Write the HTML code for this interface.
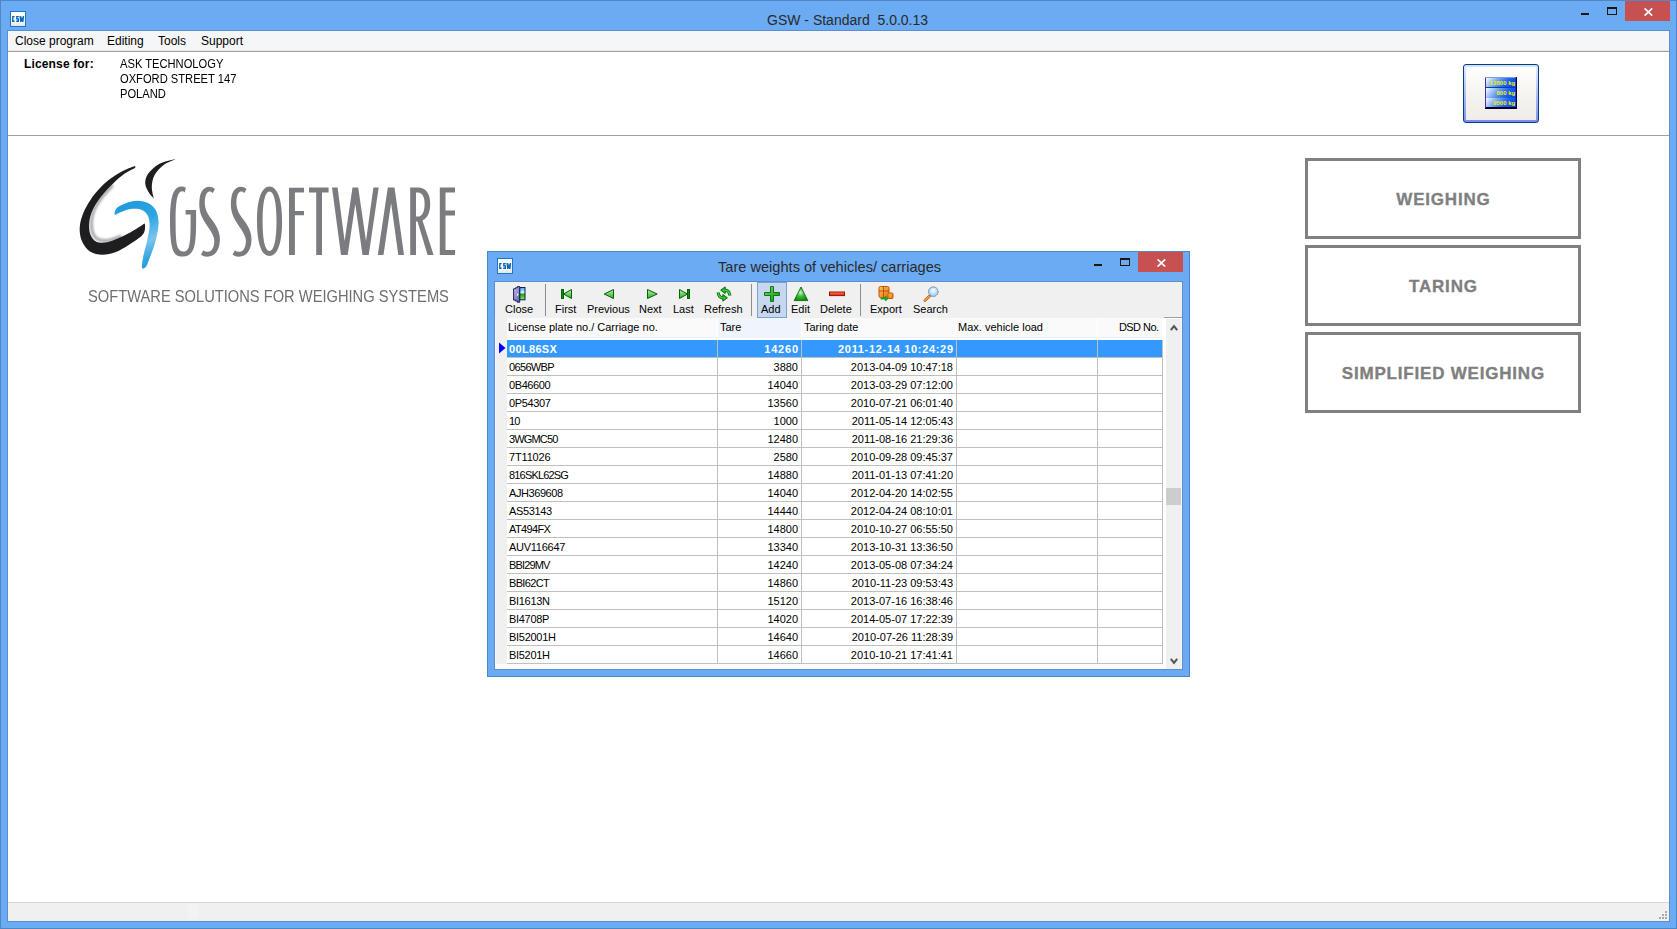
<!DOCTYPE html>
<html><head><meta charset="utf-8">
<style>
*{box-sizing:border-box;margin:0;padding:0}
html,body{width:1677px;height:929px;overflow:hidden;background:#fff}
body{position:relative;font-family:"Liberation Sans",sans-serif;color:#000}
.a{position:absolute}
#frame{left:0;top:0;width:1677px;height:929px;background:#6BABF3;border:1px solid #4E86C6}
.ttl{white-space:nowrap}
.gl{background:#1B160F}
.cbtn{background:#C75050}
.xg{position:absolute;left:0;top:0}
#client{left:8px;top:31px;width:1661px;height:890px;background:#fff;outline:1px solid #5A8ED0}
#menu{left:0;top:0;width:1661px;height:21px;background:#F5F6F7;border-bottom:1px solid #A0A0A0;box-shadow:inset 0 -1px 0 #E6E7E9}
#menu span{position:absolute;top:3px;font-size:12px;line-height:15px;color:#000}
.lic{font-size:12px;line-height:15px;margin-top:1px;white-space:nowrap}
.bigbtn{border:3px solid #808080;width:276px;height:81px;background:#fff;color:#7F7F7F;font-weight:bold;font-size:17px;text-align:center;line-height:77px;letter-spacing:0.8px;padding-left:0.8px;-webkit-text-stroke:0.35px #7F7F7F;white-space:nowrap}
#dlg{left:487px;top:251px;width:703px;height:426px;background:#6BABF3;border:1px solid #4E86C6}
#dclient{left:7px;top:30px;width:687px;height:387px;background:#fff;outline:1px solid #5A8ED0}
#tb{left:0;top:0;width:687px;height:36px;background:#F0F0F0}
.tbt{position:absolute;top:20px;font-size:11px;line-height:14px;white-space:nowrap}
.sep{position:absolute;top:2px;width:1px;height:32px;background:#8C8C8C}
.hdr{position:absolute;top:36px;height:20px;background:#FAFAFA;font-size:11px;line-height:14px;padding-top:2px;white-space:nowrap;border-bottom:1px solid #EDF2F9}
.row{position:absolute;left:12px;width:656px;height:18px;border-bottom:1px solid #BFBFBF}
.c{position:absolute;top:0;height:17px;font-size:11px;line-height:19px;white-space:nowrap;padding-top:0;border-right:1px solid #BFBFBF}
.r{text-align:right;padding-right:3px}
.l{padding-left:2px}
.sel{background:#3399FF;color:#fff;font-weight:bold}
</style></head><body>
<div id="frame" class="a"></div>
<!-- title bar -->
<svg class="a" style="left:10px;top:11px" width="16" height="16" viewBox="0 0 16 16">
<defs><linearGradient id="ig10" x1="0" y1="0" x2="0" y2="1"><stop offset="0" stop-color="#FFFFFF"/><stop offset="0.7" stop-color="#F6F6F6"/><stop offset="1" stop-color="#E2E2E2"/></linearGradient></defs>
<rect x="0.5" y="0.5" width="15" height="15" fill="url(#ig10)" stroke="#1B78C8"/>
<path d="M4.6 5.6H2.8V10.3H4.6M8.8 5.6H6.8V7.9H8.3V10.3H6.2M10.1 5L10.8 10.9L11.8 7.3L12.8 10.9L13.5 5" fill="none" stroke="#0B66B8" stroke-width="1.4"/>
</svg>
<div class="a ttl" style="left:767px;top:11px;font-size:14px;line-height:18px;color:#2A2A2A">GSW - Standard&nbsp; 5.0.0.13</div>
<div class="a gl" style="left:1581px;top:13px;width:8px;height:2px"></div>
<div class="a" style="left:1607px;top:7px;width:10px;height:8px;border:1px solid #1B160F;border-top-width:2px"></div>
<div class="a cbtn" style="left:1625px;top:1px;width:45px;height:20px"></div>
<svg class="a" style="left:1644px;top:8px" width="9" height="8" viewBox="0 0 9 8"><path d="M0.6 0.4L8.2 7.6M8.2 0.4L0.6 7.6" stroke="#fff" stroke-width="1.7"/></svg>

<div id="client" class="a">
  <div id="menu" class="a">
    <span style="left:7px">Close program</span>
    <span style="left:99px">Editing</span>
    <span style="left:150px">Tools</span>
    <span style="left:193px">Support</span>
  </div>
  <div class="a lic" style="left:16px;top:25px;font-weight:bold;letter-spacing:0.15px">License for:</div>
  <div class="a lic" style="left:112px;top:25px;transform-origin:0 0;transform:scaleX(0.93)">ASK TECHNOLOGY<br>OXFORD STREET 147<br>POLAND</div>
  <div class="a" style="left:0;top:104px;width:1661px;height:1px;background:#A0A0A0"></div>
  <div class="a" style="left:0;top:871px;width:1661px;height:19px;background:#F0F0F0;border-top:1px solid #D7D7D7"></div>
  <div class="a" style="left:180px;top:873px;width:10px;height:15px;background:#F3F3F3"></div>
</div>

<svg class="a" style="left:70px;top:150px" width="400" height="170" viewBox="70 150 400 170">
 <defs>
  <filter id="blr" x="-20%" y="-20%" width="140%" height="140%"><feGaussianBlur stdDeviation="0.8"/></filter><linearGradient id="blu" x1="0" y1="0" x2="0.3" y2="1"><stop offset="0" stop-color="#1B98DA"/><stop offset="0.45" stop-color="#2EA6E2"/><stop offset="0.75" stop-color="#7CC4EE"/><stop offset="1" stop-color="#2EA2E0"/></linearGradient>
 </defs>
 <path d="M111.9 186.2 C110.2 188.1 104.8 193.5 101.8 197.5 C98.9 201.4 95.9 205.8 94.2 209.9 C92.4 213.9 91.7 217.8 91.5 221.7 C91.4 225.7 91.8 230.6 93.0 233.6 C94.1 236.5 95.7 238.3 98.3 239.5 C100.9 240.6 104.7 240.9 108.4 240.4 C112.0 239.9 118.2 237.2 120.2 236.5" fill="none" stroke="#A8AAAE" stroke-width="3.2" stroke-linecap="round" filter="url(#blr)"/>
 <path d="M133.6 166.5 C131.5 167.0 126.4 169.1 122.3 171.2 C118.3 173.4 113.5 176.3 109.3 179.5 C105.2 182.8 101.0 186.7 97.5 190.8 C93.9 194.8 90.7 199.3 88.0 203.8 C85.4 208.3 82.9 213.5 81.5 218.0 C80.1 222.5 79.5 226.9 79.7 231.0 C79.9 235.1 80.9 239.4 82.7 242.8 C84.5 246.3 87.1 249.7 90.4 251.7 C93.6 253.7 98.1 254.6 102.2 254.7 C106.4 254.8 110.9 253.9 115.2 252.3 C119.6 250.7 124.3 247.6 128.3 245.2 C132.2 242.8 136.2 240.3 138.9 238.1 C141.6 235.9 143.2 234.6 144.2 232.2 C145.2 229.8 145.3 225.0 144.8 223.9 C144.3 222.8 143.6 224.3 141.3 225.7 C138.9 227.1 134.4 230.1 130.6 232.2 C126.9 234.3 122.7 236.4 118.8 238.1 C114.8 239.8 110.7 241.7 107.0 242.2 C103.2 242.8 99.1 242.9 96.3 241.7 C93.5 240.4 91.6 237.7 90.4 234.6 C89.2 231.4 88.8 226.9 89.2 222.7 C89.6 218.6 90.8 214.0 92.8 209.7 C94.7 205.4 97.7 201.0 101.0 196.7 C104.4 192.3 108.9 187.5 112.9 183.7 C116.8 179.8 121.1 176.2 124.7 173.6 C128.4 171.0 133.3 169.2 134.8 168.0 C136.2 166.9 135.7 166.0 133.6 166.5 Z" fill="#1E1E20"/>
 <path d="M173.8 159.5 C171.4 160.1 163.8 161.4 159.5 163.7 C155.3 166.0 150.7 170.2 148.3 173.5 C145.9 176.8 145.1 180.3 145.2 183.6 C145.4 186.9 147.7 190.7 149.4 193.4 C151.2 196.0 154.9 199.0 155.6 199.7 C156.3 200.3 154.3 199.5 153.6 197.3 C153.0 195.1 151.7 190.1 151.8 186.4 C152.0 182.6 152.6 178.4 154.6 174.9 C156.6 171.4 160.5 167.6 163.7 165.1 C166.9 162.6 172.1 161.0 173.8 160.1 C175.5 159.1 176.2 158.9 173.8 159.5 Z" fill="#1E1E20"/>
 <path d="M114.6 212.7 C115.0 211.4 115.7 208.9 117.6 207.3 C119.5 205.8 122.5 204.3 125.9 203.2 C129.2 202.1 134.0 200.8 137.7 200.8 C141.5 200.8 145.4 201.7 148.4 203.2 C151.3 204.7 153.8 207.0 155.5 209.7 C157.1 212.4 158.0 215.6 158.4 219.2 C158.8 222.7 158.5 226.7 157.8 231.0 C157.1 235.3 155.7 240.7 154.3 245.2 C152.9 249.7 151.0 254.6 149.6 258.2 C148.1 261.9 147.1 265.6 145.8 267.1 C144.5 268.6 142.2 269.5 141.9 267.5 C141.5 265.4 142.8 259.2 143.6 254.7 C144.5 250.2 146.2 245.2 147.2 240.5 C148.2 235.7 149.5 230.4 149.6 226.3 C149.7 222.1 149.2 218.4 147.8 215.6 C146.4 212.9 144.1 210.8 141.3 209.7 C138.4 208.6 134.0 208.7 130.6 209.1 C127.3 209.5 123.7 211.1 121.2 212.1 C118.6 213.0 116.6 214.6 115.5 214.7 C114.4 214.8 114.3 213.9 114.6 212.7 Z" fill="url(#blu)"/>
 <g fill="#7A7C80">
  <!-- G -->
  <path d="M185.8 187.8 C182 185.5 177 186.5 174.3 191 C171 196.5 170 207 170 221 C170 236 171 247 174 252.5 C176.5 256.5 180 256.5 183.5 256.5 C188 256.5 191.5 254 193.8 248 C195.8 242 196.1 232 196.1 222 L196.1 210 L185.6 210 L185.6 214.5 L190.6 214.5 L190.6 224 C190.6 236 190 244 188.5 248 C187 251 185 251.5 183.2 251.5 C181 251.5 179.2 250.5 178 248 C176 244 175.6 234 175.6 221 C175.6 207 176.4 198 178.5 194 C180.5 190.5 183 191 184.8 192.4 Z"/>
  <!-- S -->
  <path id="S" d="M214.9 189.1 C211 185.5 205.5 186 202.3 190.5 C199.8 194 199.3 200 199.3 205 C199.3 212 202 218 206 224 C211 231.5 214.3 236 214.3 241 C214.3 246 212.5 250.5 209.5 251.5 C207 252.2 205 251.5 203.3 250.2 L201 254.5 C203.5 256.8 207 257 210 256.3 C216 255 219.9 249 219.9 239 C219.9 232 216.5 226 212.5 220.5 C208 214.5 204.8 210 204.8 203 C204.8 197.5 206 193 208.5 191.8 C210 191 211.5 191.5 212.8 193 Z"/>
  <use href="#S" x="31.6"/>
  <!-- O -->
  <path fill-rule="evenodd" d="M269.5 186.4 C262 186.4 257 198 257 221.2 C257 244.4 262 256 269.5 256 C277 256 282.1 244.4 282.1 221.2 C282.1 198 277 186.4 269.5 186.4 Z M269.5 191.5 C265 191.5 262.6 202 262.6 221.2 C262.6 240.4 265 250.9 269.5 250.9 C274 250.9 276.5 240.4 276.5 221.2 C276.5 202 274 191.5 269.5 191.5 Z"/>
  <!-- F -->
  <path d="M289 187.8 H304 V192.4 H294.9 V211 H304 V215.2 H294.9 V255 H289 Z"/>
  <!-- T -->
  <path d="M309 187.6 H328.6 V192.4 H322 V254.9 H316.2 V192.4 H309 Z"/>
  <!-- W -->
  <path d="M332 187.6 H337.6 L344.6 241 L352.5 187.6 H358.2 L366 241 L373.4 187.6 H378.7 L368.7 254.9 H362.5 L355.3 204 L347.7 254.9 H341 Z"/>
  <!-- A -->
  <path d="M387.8 187.6 H394.5 L404 254.9 H398.3 L391.1 203 L383.5 254.9 H377.8 Z"/>
  <!-- R -->
  <path fill-rule="evenodd" d="M410.2 187.6 H418 C426 187.6 430.2 194 430.2 204 C430.2 213 427 218.5 422.5 220.5 L433.6 254.9 H427.6 L417.5 221.5 H416 V254.9 H410.2 Z M416 192.6 V216.6 H418 C422 216.6 424.6 212 424.6 204 C424.6 196.5 422 192.6 418 192.6 Z"/>
  <!-- E -->
  <path d="M439.8 187.6 H455 V192.4 H445.5 V210.5 H455 V215.5 H445.5 V250 H455 V254.9 H439.8 Z"/>
 </g>
</svg>
<div class="a" style="left:88px;top:288px;font-size:16.6px;line-height:18px;color:#6E6E6E;white-space:nowrap;transform-origin:0 0;transform:scaleX(0.885)">SOFTWARE SOLUTIONS FOR WEIGHING SYSTEMS</div>
<div class="a" style="left:1463px;top:64px;width:76px;height:59px;border:1px solid #0A3C80;border-radius:3px;background:linear-gradient(#CFE2FF,#CFE2FF) top/100% 2px no-repeat,linear-gradient(#7C8CF2,#7C8CF2) bottom/100% 2px no-repeat,linear-gradient(#E0ECFF,#8090F2) left/2px 100% no-repeat,linear-gradient(#E0ECFF,#8090F2) right/2px 100% no-repeat,linear-gradient(#FFFFFF,#F6F4F0 50%,#F0ECE7)"></div>
<svg class="a" style="left:1485px;top:77px" width="32" height="32" viewBox="0 0 32 32">
 <defs><linearGradient id="kb" x1="0" y1="0" x2="1" y2="0.25"><stop offset="0" stop-color="#FFFFFF"/><stop offset="0.4" stop-color="#7AAAF4"/><stop offset="0.75" stop-color="#1E66F0"/><stop offset="1" stop-color="#0A50E8"/></linearGradient></defs>
 <rect x="0" y="0.5" width="31.5" height="31" fill="#0A3CB0"/>
 <rect x="0.8" y="1" width="30" height="9" fill="url(#kb)"/>
 <rect x="0.8" y="11" width="30" height="9.6" fill="url(#kb)"/>
 <rect x="0.8" y="20.6" width="30" height="9.4" fill="url(#kb)"/>
 <rect x="0" y="30" width="32" height="2" fill="#000028"/>
 <rect x="30.8" y="0" width="1.2" height="32" fill="#000050"/>
 <rect x="0" y="1" width="0.8" height="30" fill="#5020A0"/>
 <g font-family="Liberation Sans" font-size="6" font-weight="bold" fill="#F2F200" text-anchor="end">
 <text x="30.2" y="8.3">12800 kg</text>
 <text x="30.2" y="18.3">800 kg</text>
 <text x="30.2" y="28.2">9500 kg</text>
 </g>
</svg>

<div class="a" style="left:1665px;top:911px;width:2px;height:2px;background:#A8A8A8"></div><div class="a" style="left:1662px;top:914px;width:2px;height:2px;background:#A8A8A8"></div><div class="a" style="left:1665px;top:914px;width:2px;height:2px;background:#A8A8A8"></div><div class="a" style="left:1659px;top:917px;width:2px;height:2px;background:#A8A8A8"></div><div class="a" style="left:1662px;top:917px;width:2px;height:2px;background:#A8A8A8"></div><div class="a" style="left:1665px;top:917px;width:2px;height:2px;background:#A8A8A8"></div>
<!-- big buttons -->
<div class="a bigbtn" style="left:1305px;top:158px">WEIGHING</div>
<div class="a bigbtn" style="left:1305px;top:245px">TARING</div>
<div class="a bigbtn" style="left:1305px;top:332px">SIMPLIFIED WEIGHING</div>

<!-- dialog -->
<div id="dlg" class="a">
<svg class="a" style="left:9px;top:6px" width="16" height="16" viewBox="0 0 16 16">
<defs><linearGradient id="ig9" x1="0" y1="0" x2="0" y2="1"><stop offset="0" stop-color="#FFFFFF"/><stop offset="0.7" stop-color="#F6F6F6"/><stop offset="1" stop-color="#E2E2E2"/></linearGradient></defs>
<rect x="0.5" y="0.5" width="15" height="15" fill="url(#ig9)" stroke="#1B78C8"/>
<path d="M4.6 5.6H2.8V10.3H4.6M8.8 5.6H6.8V7.9H8.3V10.3H6.2M10.1 5L10.8 10.9L11.8 7.3L12.8 10.9L13.5 5" fill="none" stroke="#0B66B8" stroke-width="1.4"/>
</svg>
<div class="a ttl" style="left:230px;top:6px;font-size:14.6px;line-height:18px;color:#2A2A2A">Tare weights of vehicles/ carriages</div>
<div class="a gl" style="left:606px;top:12px;width:8px;height:2px"></div>
<div class="a" style="left:632px;top:6px;width:10px;height:8px;border:1px solid #1B160F;border-top-width:2px"></div>
<div class="a cbtn" style="left:650px;top:0px;width:45px;height:20px"></div>
<svg class="a" style="left:669px;top:7px" width="9" height="8" viewBox="0 0 9 8"><path d="M0.6 0.4L8.2 7.6M8.2 0.4L0.6 7.6" stroke="#fff" stroke-width="1.7"/></svg>
<div id="dclient" class="a">
 <div id="tb" class="a">
  <div class="a" style="left:262px;top:0;width:30px;height:36px;background:#C7D7F0;border:1px solid #7B9FDA"></div>
  <div class="sep" style="left:50px"></div>
  <div class="sep" style="left:256px"></div>
  <div class="sep" style="left:365px"></div>
  <span class="tbt" style="left:10px">Close</span>
  <span class="tbt" style="left:60px">First</span>
  <span class="tbt" style="left:92px">Previous</span>
  <span class="tbt" style="left:144px">Next</span>
  <span class="tbt" style="left:178px">Last</span>
  <span class="tbt" style="left:209px">Refresh</span>
  <span class="tbt" style="left:266px">Add</span>
  <span class="tbt" style="left:296px">Edit</span>
  <span class="tbt" style="left:325px">Delete</span>
  <span class="tbt" style="left:375px">Export</span>
  <span class="tbt" style="left:418px">Search</span>
  <!-- icons -->
  <svg class="a" style="left:16px;top:3px" width="16" height="18" viewBox="0 0 16 18">
 <defs><linearGradient id="sky" x1="0" y1="0" x2="0" y2="1"><stop offset="0" stop-color="#30A8FF"/><stop offset="0.45" stop-color="#E8F8FF"/><stop offset="0.52" stop-color="#18A018"/><stop offset="1" stop-color="#78F848"/></linearGradient>
 <linearGradient id="door" x1="0" y1="0" x2="1" y2="1"><stop offset="0" stop-color="#C8C8FF"/><stop offset="1" stop-color="#5A5AA8"/></linearGradient></defs>
 <rect x="8.7" y="2.5" width="5.3" height="12.3" fill="url(#sky)" stroke="#1C1A4E" stroke-width="1"/>
 <path d="M2.6 3.8H4.5V2.8H6.3V1.6H8.7V17.2H6.3V16H4.5V15.1H2.6Z" fill="url(#door)" stroke="#1C1A4E" stroke-width="1" stroke-linejoin="round"/>
 <rect x="6" y="8.6" width="1.2" height="2" fill="#FFFFFF"/>
</svg>
<svg class="a" style="left:64px;top:4px" width="16" height="16" viewBox="0 0 16 16">
 <defs><linearGradient id="gr" x1="0" y1="0" x2="0" y2="1"><stop offset="0" stop-color="#B8F0A8"/><stop offset="1" stop-color="#2EAA2E"/></linearGradient></defs>
 <rect x="2.5" y="3.5" width="2" height="9" fill="#0E8A0E" stroke="#006400" stroke-width="1"/>
 <path d="M4.5 8L12.5 3.5L12.5 12.5Z" fill="url(#gr)" stroke="#006400" stroke-width="1" stroke-linejoin="round"/>
</svg>
<svg class="a" style="left:107px;top:4px" width="16" height="16" viewBox="0 0 16 16">
 <path d="M2.2 8L11.5 3.5L11.5 12.5Z" fill="url(#gr)" stroke="#006400" stroke-width="1" stroke-linejoin="round"/>
</svg>
<svg class="a" style="left:150px;top:4px" width="16" height="16" viewBox="0 0 16 16">
 <path d="M12.2 8L2.5 3.5L2.5 12.5Z" fill="url(#gr)" stroke="#006400" stroke-width="1" stroke-linejoin="round"/>
</svg>
<svg class="a" style="left:181px;top:4px" width="16" height="16" viewBox="0 0 16 16">
 <rect x="11.5" y="3.5" width="2" height="9" fill="#0E8A0E" stroke="#006400" stroke-width="1"/>
 <path d="M11.5 8L3.5 3.5L3.5 12.5Z" fill="url(#gr)" stroke="#006400" stroke-width="1" stroke-linejoin="round"/>
</svg>
<svg class="a" style="left:221px;top:4px" width="16" height="16" viewBox="0 0 16 16">
 <path d="M8.5 4.2C11.5 4 13.6 5.8 13.8 9.5M7.5 11.8C4.5 12 2.4 10.2 2.2 6.5" fill="none" stroke="#0A6E0A" stroke-width="3.2"/>
 <path d="M4.6 4.2L9.2 0.8L9.2 7.6Z M11.4 11.8L6.8 8.4L6.8 15.2Z" fill="#1E9A1E" stroke="#0A6E0A" stroke-width="0.9" stroke-linejoin="round"/>
 <path d="M8.5 4.2C11.5 4 13.6 5.8 13.8 9.5M7.5 11.8C4.5 12 2.4 10.2 2.2 6.5" fill="none" stroke="#48C848" stroke-width="1.5"/>
 <path d="M6 4.2L8.4 2.4L8.4 6Z M10 11.8L7.6 10L7.6 13.6Z" fill="#48C848"/>
</svg>
<svg class="a" style="left:269px;top:4px" width="16" height="16" viewBox="0 0 16 16">
 <defs><linearGradient id="gp" x1="0" y1="0" x2="1" y2="1"><stop offset="0" stop-color="#8EE070"/><stop offset="0.5" stop-color="#3CB43C"/><stop offset="1" stop-color="#139013"/></linearGradient></defs>
 <path d="M6.5 0.5H9.5V6.5H15.5V9.5H9.5V15.5H6.5V9.5H0.5V6.5H6.5Z" fill="url(#gp)" stroke="#0A7A0A" stroke-width="1"/>
</svg>
<svg class="a" style="left:298px;top:4px" width="16" height="16" viewBox="0 0 16 16">
 <defs><radialGradient id="gt" cx="0.45" cy="0.4" r="0.6"><stop offset="0" stop-color="#C8F8C0"/><stop offset="0.5" stop-color="#3CBA3C"/><stop offset="1" stop-color="#108A10"/></radialGradient></defs>
 <path d="M8 1L14.8 14.6H1.2Z" fill="url(#gt)" stroke="#0A6A0A" stroke-width="0.9" stroke-linejoin="round"/>
</svg>
<svg class="a" style="left:334px;top:4px" width="16" height="16" viewBox="0 0 16 16">
 <defs><linearGradient id="rd" x1="0" y1="0" x2="0" y2="1"><stop offset="0" stop-color="#FF8060"/><stop offset="1" stop-color="#E02000"/></linearGradient></defs>
 <rect x="0.5" y="6" width="15" height="3.6" fill="url(#rd)" stroke="#A01000" stroke-width="1"/>
</svg>
<svg class="a" style="left:383px;top:4px" width="16" height="16" viewBox="0 0 16 16">
 <defs><linearGradient id="or" x1="0" y1="0" x2="1" y2="1"><stop offset="0" stop-color="#FFC060"/><stop offset="1" stop-color="#F07010"/></linearGradient></defs>
 <rect x="1" y="0.5" width="10" height="11" rx="1.5" fill="url(#or)" stroke="#C05A00" stroke-width="1"/>
 <path d="M1 5H11M5.5 0.5V11.5" stroke="#A04800" stroke-width="0.8"/>
 <rect x="10" y="7" width="5" height="5.5" rx="1" fill="url(#or)" stroke="#C05A00" stroke-width="1"/>
 <path d="M2.5 12.5H9M7 10.5L9.5 12.5L7 14.5" fill="none" stroke="#22A022" stroke-width="1.8"/>
</svg>
<svg class="a" style="left:428px;top:4px" width="16" height="16" viewBox="0 0 16 16">
 <defs><radialGradient id="lens" cx="0.5" cy="0.4" r="0.6"><stop offset="0" stop-color="#FFFFFF"/><stop offset="1" stop-color="#8CC8F0"/></radialGradient></defs>
 <path d="M2 14.5L6.5 10" stroke="#C06010" stroke-width="2.8" stroke-linecap="round"/>
 <path d="M2 14.5L6.5 10" stroke="#F5A040" stroke-width="1.4" stroke-linecap="round"/>
 <circle cx="10.3" cy="5.7" r="4.8" fill="url(#lens)" stroke="#5A78B0" stroke-width="1" stroke-dasharray="1.6 0.6"/>
</svg>

 </div>
 <div class="a" style="left:0;top:36px;width:12px;height:346px;background:#F0F0F0;border-left:1px solid #FBF8F4"></div>
 <div class="hdr" style="left:12px;width:210px;padding-left:1px">License plate no./ Carriage no.</div>
 <div class="hdr" style="left:223px;width:83px;padding-left:2px;background:#F0F5FB">Tare</div>
 <div class="hdr" style="left:307px;width:154px;padding-left:2px">Taring date</div>
 <div class="hdr" style="left:462px;width:140px;padding-left:1px">Max. vehicle load</div>
 <div class="hdr" style="left:603px;width:64px;text-align:right;padding-right:3.5px;letter-spacing:-0.55px">DSD No.</div>
 <svg class="a" style="left:1px;top:60px" width="10" height="12" viewBox="0 0 10 12"><path d="M3 0.5L9.5 6L3 11.5Z" fill="#0000FF"/></svg>
 <div class="row sel" style="top:58px"><div class="c l" style="left:0;width:211px;letter-spacing:0.33px">00L86SX</div><div class="c r" style="left:211px;width:84px;letter-spacing:0.8px;padding-right:2.2px">14260</div><div class="c r" style="left:295px;width:155px;letter-spacing:0.68px;padding-right:2.3px">2011-12-14 10:24:29</div><div class="c" style="left:450px;width:141px"></div><div class="c" style="left:591px;width:65px"></div></div>
<div class="row" style="top:76px"><div class="c l" style="left:0;width:211px;letter-spacing:-0.65px">0656WBP</div><div class="c r" style="left:211px;width:84px;">3880</div><div class="c r" style="left:295px;width:155px;">2013-04-09 10:47:18</div><div class="c" style="left:450px;width:141px"></div><div class="c" style="left:591px;width:65px"></div></div>
<div class="row" style="top:94px"><div class="c l" style="left:0;width:211px;letter-spacing:-0.4px">0B46600</div><div class="c r" style="left:211px;width:84px;">14040</div><div class="c r" style="left:295px;width:155px;">2013-03-29 07:12:00</div><div class="c" style="left:450px;width:141px"></div><div class="c" style="left:591px;width:65px"></div></div>
<div class="row" style="top:112px"><div class="c l" style="left:0;width:211px;letter-spacing:-0.35px">0P54307</div><div class="c r" style="left:211px;width:84px;">13560</div><div class="c r" style="left:295px;width:155px;">2010-07-21 06:01:40</div><div class="c" style="left:450px;width:141px"></div><div class="c" style="left:591px;width:65px"></div></div>
<div class="row" style="top:130px"><div class="c l" style="left:0;width:211px;letter-spacing:-0.82px">10</div><div class="c r" style="left:211px;width:84px;">1000</div><div class="c r" style="left:295px;width:155px;">2011-05-14 12:05:43</div><div class="c" style="left:450px;width:141px"></div><div class="c" style="left:591px;width:65px"></div></div>
<div class="row" style="top:148px"><div class="c l" style="left:0;width:211px;letter-spacing:-0.85px">3WGMC50</div><div class="c r" style="left:211px;width:84px;">12480</div><div class="c r" style="left:295px;width:155px;">2011-08-16 21:29:36</div><div class="c" style="left:450px;width:141px"></div><div class="c" style="left:591px;width:65px"></div></div>
<div class="row" style="top:166px"><div class="c l" style="left:0;width:211px;letter-spacing:-0.17px">7T11026</div><div class="c r" style="left:211px;width:84px;">2580</div><div class="c r" style="left:295px;width:155px;">2010-09-28 09:45:37</div><div class="c" style="left:450px;width:141px"></div><div class="c" style="left:591px;width:65px"></div></div>
<div class="row" style="top:184px"><div class="c l" style="left:0;width:211px;letter-spacing:-0.82px">816SKL62SG</div><div class="c r" style="left:211px;width:84px;">14880</div><div class="c r" style="left:295px;width:155px;">2011-01-13 07:41:20</div><div class="c" style="left:450px;width:141px"></div><div class="c" style="left:591px;width:65px"></div></div>
<div class="row" style="top:202px"><div class="c l" style="left:0;width:211px;letter-spacing:-0.42px">AJH369608</div><div class="c r" style="left:211px;width:84px;">14040</div><div class="c r" style="left:295px;width:155px;">2012-04-20 14:02:55</div><div class="c" style="left:450px;width:141px"></div><div class="c" style="left:591px;width:65px"></div></div>
<div class="row" style="top:220px"><div class="c l" style="left:0;width:211px;letter-spacing:-0.37px">AS53143</div><div class="c r" style="left:211px;width:84px;">14440</div><div class="c r" style="left:295px;width:155px;">2012-04-24 08:10:01</div><div class="c" style="left:450px;width:141px"></div><div class="c" style="left:591px;width:65px"></div></div>
<div class="row" style="top:238px"><div class="c l" style="left:0;width:211px;letter-spacing:-0.62px">AT494FX</div><div class="c r" style="left:211px;width:84px;">14800</div><div class="c r" style="left:295px;width:155px;">2010-10-27 06:55:50</div><div class="c" style="left:450px;width:141px"></div><div class="c" style="left:591px;width:65px"></div></div>
<div class="row" style="top:256px"><div class="c l" style="left:0;width:211px;letter-spacing:-0.27px">AUV116647</div><div class="c r" style="left:211px;width:84px;">13340</div><div class="c r" style="left:295px;width:155px;">2013-10-31 13:36:50</div><div class="c" style="left:450px;width:141px"></div><div class="c" style="left:591px;width:65px"></div></div>
<div class="row" style="top:274px"><div class="c l" style="left:0;width:211px;letter-spacing:-0.85px">BBI29MV</div><div class="c r" style="left:211px;width:84px;">14240</div><div class="c r" style="left:295px;width:155px;">2013-05-08 07:34:24</div><div class="c" style="left:450px;width:141px"></div><div class="c" style="left:591px;width:65px"></div></div>
<div class="row" style="top:292px"><div class="c l" style="left:0;width:211px;letter-spacing:-0.65px">BBI62CT</div><div class="c r" style="left:211px;width:84px;">14860</div><div class="c r" style="left:295px;width:155px;">2010-11-23 09:53:43</div><div class="c" style="left:450px;width:141px"></div><div class="c" style="left:591px;width:65px"></div></div>
<div class="row" style="top:310px"><div class="c l" style="left:0;width:211px;letter-spacing:-0.31px">BI1613N</div><div class="c r" style="left:211px;width:84px;">15120</div><div class="c r" style="left:295px;width:155px;">2013-07-16 16:38:46</div><div class="c" style="left:450px;width:141px"></div><div class="c" style="left:591px;width:65px"></div></div>
<div class="row" style="top:328px"><div class="c l" style="left:0;width:211px;letter-spacing:-0.31px">BI4708P</div><div class="c r" style="left:211px;width:84px;">14020</div><div class="c r" style="left:295px;width:155px;">2014-05-07 17:22:39</div><div class="c" style="left:450px;width:141px"></div><div class="c" style="left:591px;width:65px"></div></div>
<div class="row" style="top:346px"><div class="c l" style="left:0;width:211px;letter-spacing:-0.28px">BI52001H</div><div class="c r" style="left:211px;width:84px;">14640</div><div class="c r" style="left:295px;width:155px;">2010-07-26 11:28:39</div><div class="c" style="left:450px;width:141px"></div><div class="c" style="left:591px;width:65px"></div></div>
<div class="row" style="top:364px"><div class="c l" style="left:0;width:211px;letter-spacing:-0.31px">BI5201H</div><div class="c r" style="left:211px;width:84px;">14660</div><div class="c r" style="left:295px;width:155px;">2010-10-21 17:41:41</div><div class="c" style="left:450px;width:141px"></div><div class="c" style="left:591px;width:65px"></div></div>
 <!-- scrollbar -->
 <div class="a" style="left:669px;top:35px;width:18px;height:1px;background:#A0A0A0"></div>
 <div class="a" style="left:671px;top:37px;width:16px;height:350px;background:#F0F0F0;border-right:1px solid #FBF8F4"></div>
 <div class="a" style="left:671px;top:206px;width:15px;height:17px;background:#CDCDCD"></div>
 <svg class="a" style="left:674.5px;top:42px" width="8" height="7" viewBox="0 0 8 7"><path d="M0.8 6.1L4 2.1L7.2 6.1" fill="none" stroke="#555" stroke-width="2.1"/></svg>
 <svg class="a" style="left:674.5px;top:375.5px" width="8" height="7" viewBox="0 0 8 7"><path d="M0.8 0.9L4 4.9L7.2 0.9" fill="none" stroke="#555" stroke-width="2.1"/></svg>
</div>
</div>

</body></html>
